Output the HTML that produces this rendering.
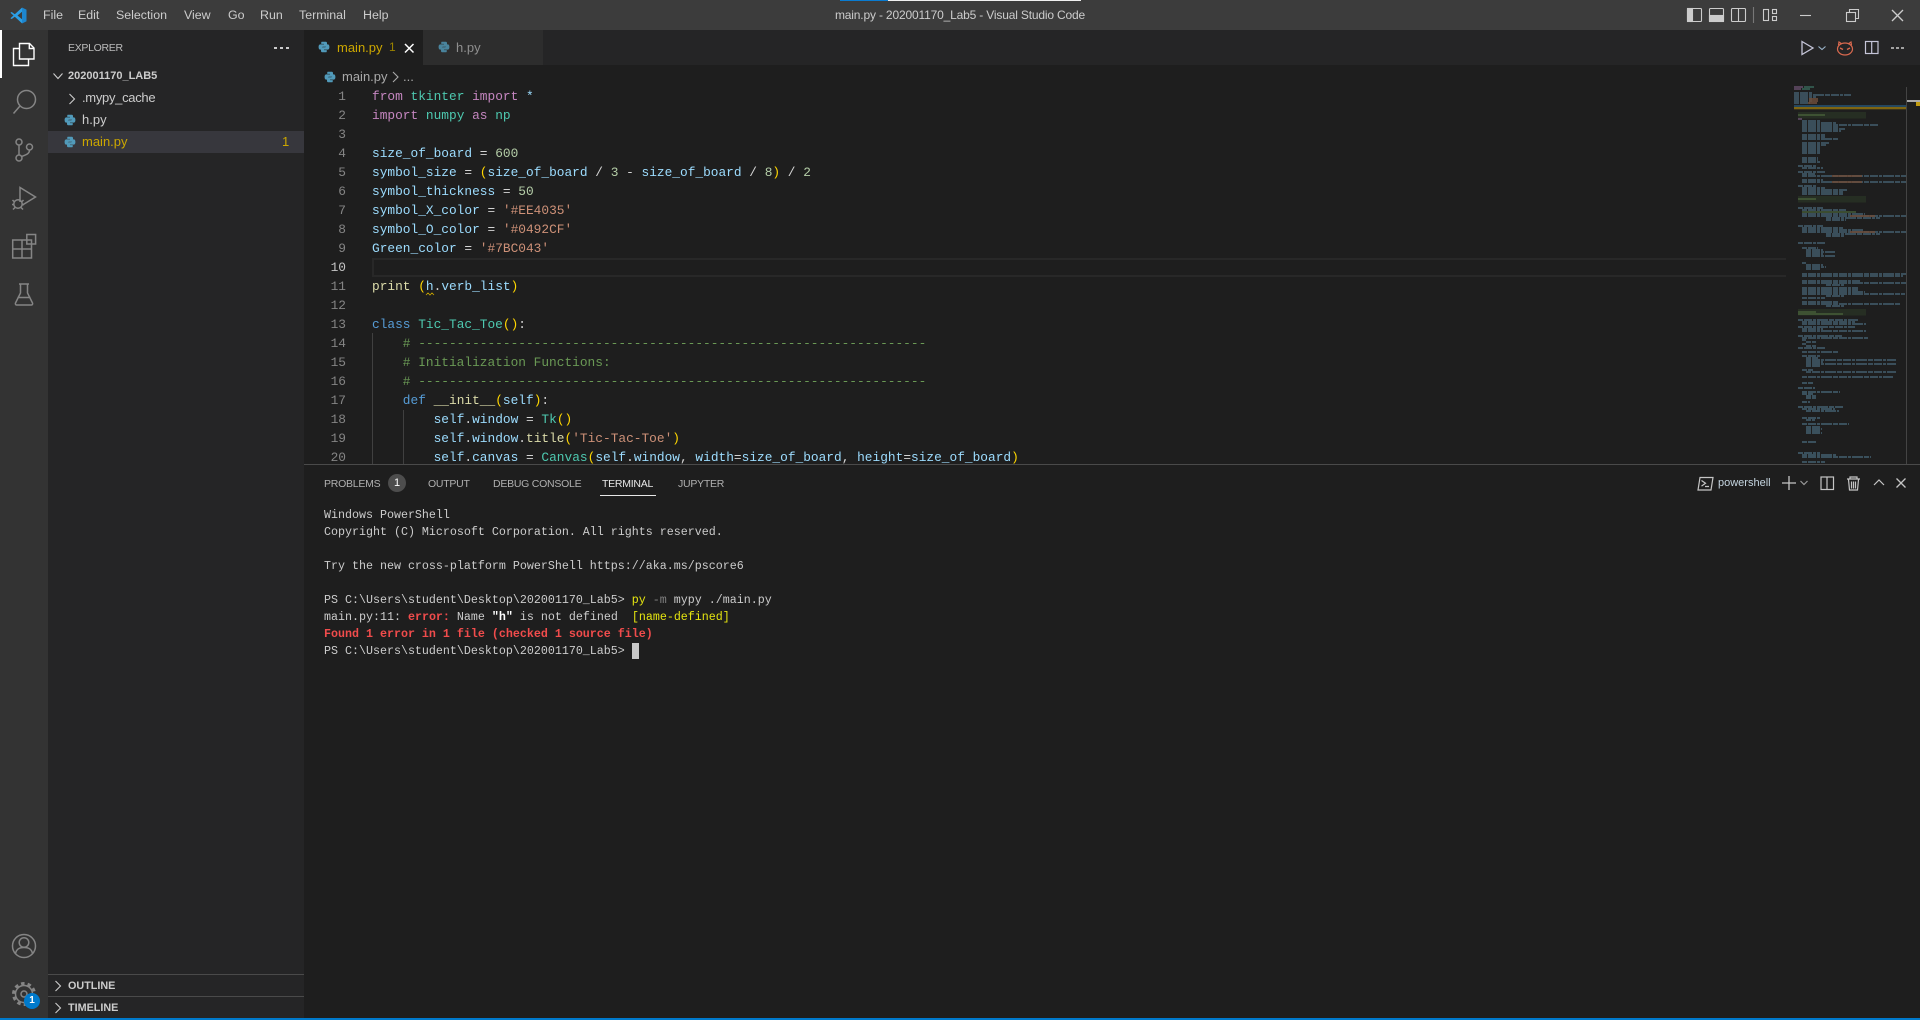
<!DOCTYPE html>
<html><head><meta charset="utf-8"><title>main.py - 202001170_Lab5 - Visual Studio Code</title>
<style>
html,body{margin:0;padding:0;width:1920px;height:1020px;overflow:hidden;background:#1e1e1e}
*{box-sizing:border-box}
body{font-family:"Liberation Sans",sans-serif;color:#ccc;position:relative}
.a{position:absolute;white-space:pre}
.m{position:absolute;top:0;height:30px;line-height:30px;font-size:12.4px;color:#ccc}
.st{font-size:13px;line-height:22px;height:22px}
.code{position:absolute;left:372px;top:0;font:12.83px/19px "Liberation Mono",monospace;color:#d4d4d4;white-space:pre}
.c{position:absolute;left:0;height:19px;white-space:pre}
.n{position:absolute;left:310px;width:36px;text-align:right;font:12.83px/19px "Liberation Mono",monospace;color:#858585}
.t{position:absolute;left:324px;font:11.67px/17px "Liberation Mono",monospace;color:#ccc;white-space:pre}
.p{color:#c586c0}.k{color:#569cd6}.v{color:#9cdcfe}.g{color:#4ec9b0}.s{color:#ce9178}.d{color:#b5cea8}.o{color:#6a9955}.f{color:#dcdcaa}.b{color:#ffd700}
.r{color:#f14c4c;font-weight:bold}.y{color:#e5e510}
.pt{position:absolute;top:475px;height:18px;line-height:18px;font-size:10.5px;letter-spacing:-.25px;color:#b0b0b0}
svg{position:absolute;overflow:visible}
</style></head><body>
<svg width="0" height="0" style="position:absolute"><defs>
<symbol id="py" viewBox="0 0 16 16"><g fill="#519aba"><path id="pyh" d="M5 1h5.500c.8 0 1.500.7 1.500 1.500v3.700c0 .8-.7 1.500-1.500 1.500H6.500c-.8 0-1.500.7-1.500 1.500V11.500H3c-1.200 0-2.200-1-2.200-3.500S1.800 4.500 3.200 4.500H8V3.800H4.300V2.500C4.300 1.700 4.500 1 5 1z"/><path d="M11 15H5.500c-.8 0-1.500-.7-1.500-1.500V9.800c0-.8.7-1.500 1.500-1.500h4c.8 0 1.500-.7 1.500-1.500V4.500H13c1.200 0 2.200 1 2.200 3.500s-1 3.500-2.400 3.500H8v.7h3.700v1.300c0 .8-.2 1.500-.7 1.500z"/></g></symbol>
</defs></svg>

<!-- title bar -->
<div class="a" style="left:0;top:0;width:1920px;height:30px;background:#3c3c3c"></div>
<div class="a" style="left:840px;top:0;width:48px;height:1px;background:#0a7bd0"></div>
<div class="a" style="left:888px;top:0;width:193px;height:1px;background:#f0f0f0"></div>
<svg style="left:10px;top:7px" width="17" height="17" viewBox="0 0 17 17"><path d="M12 .6L16.400 2.700V14.300L12 16.400 4.800 9.700 1.700 12 .4 11.300 3.500 8.500.4 5.700 1.700 5l3.100 2.300z" fill="#2b9fe6"/><path d="M12 4.700L7.500 8.500 12 12.300z" fill="#3c3c3c"/><path d="M12 .6l4.400 2.100v11.600L12 16.400z" fill="#1d86cf"/></svg>
<div class="m" style="left:43px">File</div><div class="m" style="left:78px">Edit</div><div class="m" style="left:116px">Selection</div><div class="m" style="left:184px">View</div><div class="m" style="left:228px">Go</div><div class="m" style="left:260px">Run</div><div class="m" style="left:299px">Terminal</div><div class="m" style="left:363px">Help</div>
<div class="a" style="left:810px;top:0;width:300px;text-align:center;line-height:31px;font-size:12px;letter-spacing:-.17px;color:#ccc">main.py - 202001170_Lab5 - Visual Studio Code</div>
<svg style="left:1680px;top:0" width="240" height="30" fill="none" stroke="#ccc" stroke-width="1.100">
<rect x="7.500" y="8.500" width="14" height="13" rx="1"/><rect x="7.500" y="8.500" width="5" height="13" fill="#ccc"/>
<rect x="29.500" y="8.500" width="14" height="13" rx="1"/><rect x="29.500" y="15.500" width="14" height="6" fill="#ccc"/>
<rect x="51.500" y="8.500" width="14" height="13" rx="1"/><path d="M58.500 8.500v13"/>
<path d="M73.500 7v16" stroke="#777"/>
<rect x="83.500" y="9.500" width="5" height="11"/><rect x="92.500" y="9.500" width="4" height="4"/><rect x="92.500" y="16.500" width="4" height="4"/>
<path d="M120 15.500h11" />
<rect x="166.500" y="12.500" width="9" height="9"/><path d="M169.500 12.500v-3h9v9h-3"/>
<path d="M212 10l11 11M223 10l-11 11" stroke-width="1.300"/>
</svg>

<!-- activity bar -->
<div class="a" style="left:0;top:30px;width:48px;height:988px;background:#333"></div>
<div class="a" style="left:0;top:30px;width:2px;height:48px;background:#fff"></div>
<svg style="left:0;top:30px" width="48" height="290" fill="none" stroke="#fff" stroke-width="1.400">
<path d="M19.500 29V13.500h10l4.500 4.500v11z M19.500 29H34"/><path d="M29.300 13.500v5H34"/>
<path d="M19.500 18.500h-6v17h15V29"/>
<g stroke="#858585" stroke-width="1.500">
<circle cx="26.500" cy="69.500" r="9"/><path d="M20 76L13.500 83.500"/>
<circle cx="19" cy="112" r="3"/><circle cx="19" cy="128" r="3"/><circle cx="29.500" cy="117" r="3"/><path d="M19 115v10M29.500 120c0 4-4 5-8 6.500"/>
<path d="M20 172v-14.500l15.500 9.500-13 8"/><circle cx="18" cy="174" r="4.200"/><path d="M12.500 170l2 2M23.500 170l-2 2M12 174.500h2M22 174.500h2M13 179.500l2-2M23 179.500l-2-2"/>
<rect x="12.700" y="210" width="18.800" height="18" /><path d="M22 210v18M12.700 219h18.800"/><rect x="26.800" y="204.500" width="8.800" height="9.500"/>
<path d="M19 254h10M20.500 254v9L15.500 273c-.5 1 .2 2 1 2h15c.8 0 1.500-1 1-2L27.500 263v-9M17.500 267.500h13"/>
</g></svg>
<svg style="left:0;top:920px" width="48" height="98" fill="none" stroke="#858585" stroke-width="1.500">
<circle cx="24" cy="26" r="11.500"/><circle cx="24" cy="22.500" r="4.800"/><path d="M15.500 33.500c1-5 4.500-6 8.500-6s7.500 1 8.500 6"/>
<circle cx="24" cy="74" r="8.500" stroke-width="1.500"/><circle cx="24" cy="74" r="10.500" stroke-width="3" stroke-dasharray="3.500 3.100"/><circle cx="24" cy="74" r="3"/>
</svg>
<div class="a" style="left:24px;top:993px;width:16px;height:16px;border-radius:50%;background:#007acc;color:#fff;font-size:10px;font-weight:bold;line-height:16px;text-align:center">1</div>

<!-- sidebar -->
<div class="a" style="left:48px;top:30px;width:256px;height:988px;background:#252526"></div>
<div class="a" style="left:68px;top:39px;font-size:10.500px;letter-spacing:-.3px;line-height:18px;color:#bbb">EXPLORER</div>
<svg style="left:274px;top:46px" width="16" height="4" fill="#ccc"><rect y="1" width="3" height="2"/><rect x="6" y="1" width="3" height="2"/><rect x="12" y="1" width="3" height="2"/></svg>
<svg style="left:52px;top:72px" width="12" height="9" fill="none" stroke="#ccc" stroke-width="1.100"><path d="M1.500 1.500L6 6.500l4.500-5"/></svg>
<div class="a" style="left:68px;top:67px;font-size:11px;font-weight:bold;line-height:18px;color:#ccc">202001170_LAB5</div>
<svg style="left:68px;top:93px" width="9" height="12" fill="none" stroke="#ccc" stroke-width="1.100"><path d="M1.500 1l5 5-5 5"/></svg>
<div class="a st" style="left:82px;top:87px;letter-spacing:-.3px;color:#ccc">.mypy_cache</div>
<svg style="left:64px;top:114px" width="12" height="12"><use href="#py"/></svg>
<div class="a st" style="left:82px;top:109px;color:#ccc">h.py</div>
<div class="a" style="left:48px;top:131px;width:256px;height:22px;background:#37373d"></div>
<svg style="left:64px;top:136px" width="12" height="12"><use href="#py"/></svg>
<div class="a st" style="left:82px;top:131px;color:#cca700">main.py</div>
<div class="a st" style="left:282px;top:131px;color:#cca700">1</div>
<div class="a" style="left:48px;top:974px;width:256px;height:1px;background:#4a4a4a"></div>
<div class="a" style="left:48px;top:996px;width:256px;height:1px;background:#4a4a4a"></div>
<svg style="left:54px;top:980px" width="9" height="12" fill="none" stroke="#ccc" stroke-width="1.100"><path d="M1.500 1l5 5-5 5"/></svg>
<svg style="left:54px;top:1002px" width="9" height="12" fill="none" stroke="#ccc" stroke-width="1.100"><path d="M1.500 1l5 5-5 5"/></svg>
<div class="a" style="left:68px;top:977px;font-size:10.800px;font-weight:bold;line-height:18px;color:#ccc">OUTLINE</div>
<div class="a" style="left:68px;top:999px;font-size:10.800px;font-weight:bold;line-height:18px;color:#ccc">TIMELINE</div>

<!-- tabs -->
<div class="a" style="left:304px;top:30px;width:1616px;height:35px;background:#252526"></div>
<div class="a" style="left:304px;top:30px;width:119px;height:35px;background:#1e1e1e"></div>
<div class="a" style="left:423px;top:30px;width:120px;height:35px;background:#2d2d2d"></div>
<svg style="left:318px;top:41px" width="12" height="12"><use href="#py"/></svg>
<div class="a" style="left:337px;top:37px;font-size:13px;line-height:22px;color:#cca700">main.py</div>
<div class="a" style="left:389px;top:36px;font-size:12px;line-height:22px;color:#9a8200">1</div>
<svg style="left:404px;top:43px" width="11" height="11" fill="none" stroke="#fff" stroke-width="1.500"><path d="M1 1l8.500 8.500M9.500 1L1 9.500"/></svg>
<svg style="left:438px;top:41px;opacity:.8" width="12" height="12"><use href="#py"/></svg>
<div class="a" style="left:456px;top:37px;font-size:13px;line-height:22px;color:#8f8f8f">h.py</div>
<svg style="left:1780px;top:36px" width="130" height="24" fill="none">
<path d="M22 5.500l11 6.500-11 6.500z" stroke="#c5c5d8" stroke-width="1.300"/>
<path d="M38.500 10.500l3.500 3 3.500-3" stroke="#9cb6cc" stroke-width="1.100"/>
<ellipse cx="65" cy="13" rx="7.500" ry="6" stroke="#d9694f" stroke-width="1.200"/><path d="M58.500 9l.5-3 3 2M71.500 9l-.5-3-3 2" stroke="#d9694f" stroke-width="1.200"/><path d="M60 12l3 1.500M70 12l-3 1.500" stroke="#d9694f" stroke-width="1.400"/>
<rect x="85.500" y="5.500" width="12.500" height="12" stroke="#c5c5d8" stroke-width="1.200"/><path d="M91.700 5.500v12" stroke="#c5c5d8" stroke-width="1.200"/>
<path d="M111 12h3M116 12h3M121 12h3" stroke="#ccc" stroke-width="1.500"/>
</svg>

<!-- breadcrumb -->
<svg style="left:324px;top:71px" width="12" height="12"><use href="#py"/></svg>
<div class="a" style="left:342px;top:66px;font-size:13px;line-height:22px;color:#a9a9a9">main.py</div>
<svg style="left:392px;top:71px" width="7" height="12" fill="none" stroke="#a9a9a9" stroke-width="1.100"><path d="M1 1l5 5-5 5"/></svg>
<div class="a" style="left:403px;top:66px;font-size:13px;line-height:22px;color:#a9a9a9">...</div>

<!-- editor -->
<div class="a" style="left:304px;top:87px;width:1616px;height:377px;overflow:hidden" id="ed">
<div class="a" style="left:68px;top:171px;width:1414px;height:19px;border:2px solid #282828;border-right:0"></div>
<div class="a" style="left:68px;top:246px;width:1px;height:131px;background:#404040"></div>
<div class="a" style="left:99px;top:323px;width:1px;height:54px;background:#404040"></div>
</div>
<div class="a" style="left:0;top:87px;width:1786px;height:377px;overflow:hidden;pointer-events:none">
<div class="n" style="top:0">1</div><div class="n" style="top:19px">2</div><div class="n" style="top:38px">3</div><div class="n" style="top:57px">4</div><div class="n" style="top:76px">5</div><div class="n" style="top:95px">6</div><div class="n" style="top:114px">7</div><div class="n" style="top:133px">8</div><div class="n" style="top:152px">9</div><div class="n" style="top:171px;color:#c6c6c6">10</div><div class="n" style="top:190px">11</div><div class="n" style="top:209px">12</div><div class="n" style="top:228px">13</div><div class="n" style="top:247px">14</div><div class="n" style="top:266px">15</div><div class="n" style="top:285px">16</div><div class="n" style="top:304px">17</div><div class="n" style="top:323px">18</div><div class="n" style="top:342px">19</div><div class="n" style="top:361px">20</div>
<div class="code">
<div class="c" style="top:0"><span class="p">from</span> <span class="g">tkinter</span> <span class="p">import</span> <span class="v">*</span></div>
<div class="c" style="top:19px"><span class="p">import</span> <span class="g">numpy</span> <span class="p">as</span> <span class="g">np</span></div>
<div class="c" style="top:57px"><span class="v">size_of_board</span> = <span class="d">600</span></div>
<div class="c" style="top:76px"><span class="v">symbol_size</span> = <span class="b">(</span><span class="v">size_of_board</span> / <span class="d">3</span> - <span class="v">size_of_board</span> / <span class="d">8</span><span class="b">)</span> / <span class="d">2</span></div>
<div class="c" style="top:95px"><span class="v">symbol_thickness</span> = <span class="d">50</span></div>
<div class="c" style="top:114px"><span class="v">symbol_X_color</span> = <span class="s">'#EE4035'</span></div>
<div class="c" style="top:133px"><span class="v">symbol_O_color</span> = <span class="s">'#0492CF'</span></div>
<div class="c" style="top:152px"><span class="v">Green_color</span> = <span class="s">'#7BC043'</span></div>
<div class="c" style="top:190px"><span class="f">print</span> <span class="b">(</span><span class="v">h</span><span>.</span><span class="v">verb_list</span><span class="b">)</span></div>
<div class="c" style="top:228px"><span class="k">class</span> <span class="g">Tic_Tac_Toe</span><span class="b">()</span>:</div>
<div class="c" style="top:247px">    <span class="o"># ------------------------------------------------------------------</span></div>
<div class="c" style="top:266px">    <span class="o"># Initialization Functions:</span></div>
<div class="c" style="top:285px">    <span class="o"># ------------------------------------------------------------------</span></div>
<div class="c" style="top:304px">    <span class="k">def</span> <span class="f">__init__</span><span class="b">(</span><span class="v">self</span><span class="b">)</span>:</div>
<div class="c" style="top:323px">        <span class="v">self</span>.<span class="v">window</span> = <span class="g">Tk</span><span class="b">()</span></div>
<div class="c" style="top:342px">        <span class="v">self</span>.<span class="v">window</span>.<span class="f">title</span><span class="b">(</span><span class="s">'Tic-Tac-Toe'</span><span class="b">)</span></div>
<div class="c" style="top:361px">        <span class="v">self</span>.<span class="v">canvas</span> = <span class="g">Canvas</span><span class="b">(</span><span class="v">self</span>.<span class="v">window</span>, <span class="v">width</span>=<span class="v">size_of_board</span>, <span class="v">height</span>=<span class="v">size_of_board</span><span class="b">)</span></div>
</div>
<svg style="left:426px;top:205px" width="9" height="4" fill="none" stroke="#cca700" stroke-width=".8"><path d="M0 3L2 1l2 2 2-2 2 2"/></svg>
</div>

<!-- minimap -->
<svg style="left:0;top:0" width="1920" height="470" fill="none">
<rect x="1794" y="105" width="112" height="2" fill="#24475f"/>
<rect x="1794" y="107" width="112" height="2.300" fill="#7f6511"/>
<rect x="1798" y="112" width="68" height="6.500" fill="#262e23"/>
<rect x="1798" y="196" width="68" height="6.500" fill="#262e23"/>
<rect x="1798" y="309" width="68" height="6.500" fill="#262e23"/>
<g opacity=".8">
<path stroke-width="1.500" stroke="#7a5a80" d="M1794 87h9M1794 89h7M1798 119h4"/>
<path stroke-width="1.500" stroke="#3f7a68" d="M1804 87h10M1802 89h8"/>
<path stroke-width="1.500" stroke="#4d7084" stroke-dasharray="5 1 8 1 3 1 11 1" d="M1794 93h19M1794 95h57M1794 97h22M1794 99h18M1794 101h18M1794 103h16M1802 121h18M1802 123h34M1802 125h76M1802 127h36M1802 129h43M1802 131h39M1802 135h23M1802 137h23M1802 139h36M1802 143h27M1802 145h24M1802 147h19M1802 149h19M1802 151h19M1802 153h18M1802 158h16M1802 160h16M1802 162h18M1798 166h18M1802 168h21M1798 172h27M1802 174h13M1802 176h104M1802 180h21M1802 182h104M1798 186h18M1802 188h23M1802 190h46M1802 192h41M1802 194h41M1798 208h25M1802 210h44M1802 214h63M1802 216h104M1826 218h54M1826 220h20M1798 226h25M1802 228h41M1802 230h61M1802 232h104M1826 234h54M1826 236h18M1798 243h27M1802 248h16M1806 250h17M1806 252h29M1806 254h17M1806 256h29M1802 263h4M1806 265h17M1806 267h20M1806 269h15M1802 274h104M1802 276h101M1802 281h58M1802 283h104M1826 285h18M1802 288h56M1802 290h56M1802 292h63M1802 294h103M1826 296h18M1802 298h23M1802 302h36M1802 304h99M1826 306h18M1798 320h60M1802 322h53M1802 324h64M1798 327h57M1802 329h21M1802 331h64M1798 336h44M1802 338h66M1802 340h4M1806 342h10M1802 344h4M1806 346h10M1798 348h27M1802 352h36M1802 356h18M1806 358h12M1806 360h90M1806 362h17M1806 364h90M1806 366h14M1802 370h11M1806 372h90M1802 377h91M1802 383h11M1798 388h17M1802 392h38M1802 394h11M1806 396h10M1806 398h10M1802 402h8M1798 407h45M1802 409h33M1806 411h33M1802 418h19M1806 420h9M1802 424h47M1806 427h14M1806 429h16M1806 431h14M1806 433h16M1802 442h14M1798 453h22M1802 455h34M1802 457h69M1802 462h23"/>
<path stroke-width="1.500" stroke="#4f6b3f" d="M1798 115h27M1798 199h18M1802 212h54M1798 312h18M1798 314h45"/>
<path stroke-width="1.500" stroke="#8a5e45" d="M1809 99h9M1809 101h9M1808 103h9M1832 176h30M1832 182h30M1850 216h25M1850 232h25"/>
</g>
<path stroke="#444" d="M1906.500 87v377"/>
<rect x="1907" y="100" width="13" height="2" fill="#aaa"/>
<rect x="1916" y="102" width="4" height="4" fill="#c09a10"/>
</svg>

<!-- panel -->
<div class="a" style="left:304px;top:464px;width:1616px;height:1px;background:#4a4a4a"></div>
<div class="pt" style="left:324px">PROBLEMS</div>
<div class="a" style="left:388px;top:474px;width:18px;height:18px;border-radius:50%;background:#4d4d4d;color:#fff;font-size:11px;line-height:18px;text-align:center">1</div>
<div class="pt" style="left:428px">OUTPUT</div>
<div class="pt" style="left:493px">DEBUG CONSOLE</div>
<div class="pt" style="left:602px;color:#e7e7e7">TERMINAL</div>
<div class="pt" style="left:678px">JUPYTER</div>
<div class="a" style="left:600px;top:495px;width:56px;height:1px;background:#e7e7e7"></div>
<svg style="left:1690px;top:470px" width="225" height="28" fill="none" stroke="#c5c5c5" stroke-width="1.200">
<path d="M10 7.500h13l-2 12.500H8z"/><path d="M11.500 10.500l4 2.800-4 2.800M15 16.500h4"/>
<path d="M92 13h14M99 6v14" stroke-width="1.300"/><path d="M110.500 11l3.500 3.500 3.500-3.500" stroke="#9a9a9a"/>
<rect x="131" y="7" width="12.500" height="12.500"/><path d="M137 7v12.500"/>
<path d="M157 9h13M160 9V7h7v2M158.500 9.500l1 10.500h8l1-10.500M161.500 11.500v7M163.500 11.500v7M165.500 11.500v7"/>
<path d="M184 15l5-5 5 5"/>
<path d="M206.500 8.500l9 9M215.500 8.500l-9 9" stroke-width="1.300"/>
</svg>
<div class="a" style="left:1718px;top:474px;font-size:11px;line-height:18px;color:#c5d5e0">powershell</div>

<!-- terminal -->
<div class="t" style="top:507px">Windows PowerShell</div>
<div class="t" style="top:524px">Copyright (C) Microsoft Corporation. All rights reserved.</div>
<div class="t" style="top:558px">Try the new cross-platform PowerShell https://aka.ms/pscore6</div>
<div class="t" style="top:592px">PS C:\Users\student\Desktop\202001170_Lab5&gt; <span class="y">py</span> <span style="color:#808080">-m</span> mypy ./main.py</div>
<div class="t" style="top:609px">main.py:11: <span class="r">error:</span> Name <b style="color:#fff">"h"</b> is not defined  <span class="y">[name-defined]</span></div>
<div class="t" style="top:626px"><span class="r">Found 1 error in 1 file (checked 1 source file)</span></div>
<div class="t" style="top:643px">PS C:\Users\student\Desktop\202001170_Lab5&gt;</div>
<div class="a" style="left:632px;top:643px;width:7px;height:16px;background:#c8c8c8"></div>

<!-- status bar -->
<div class="a" style="left:0;top:1018px;width:1920px;height:2px;background:#007acc"></div>
</body></html>
